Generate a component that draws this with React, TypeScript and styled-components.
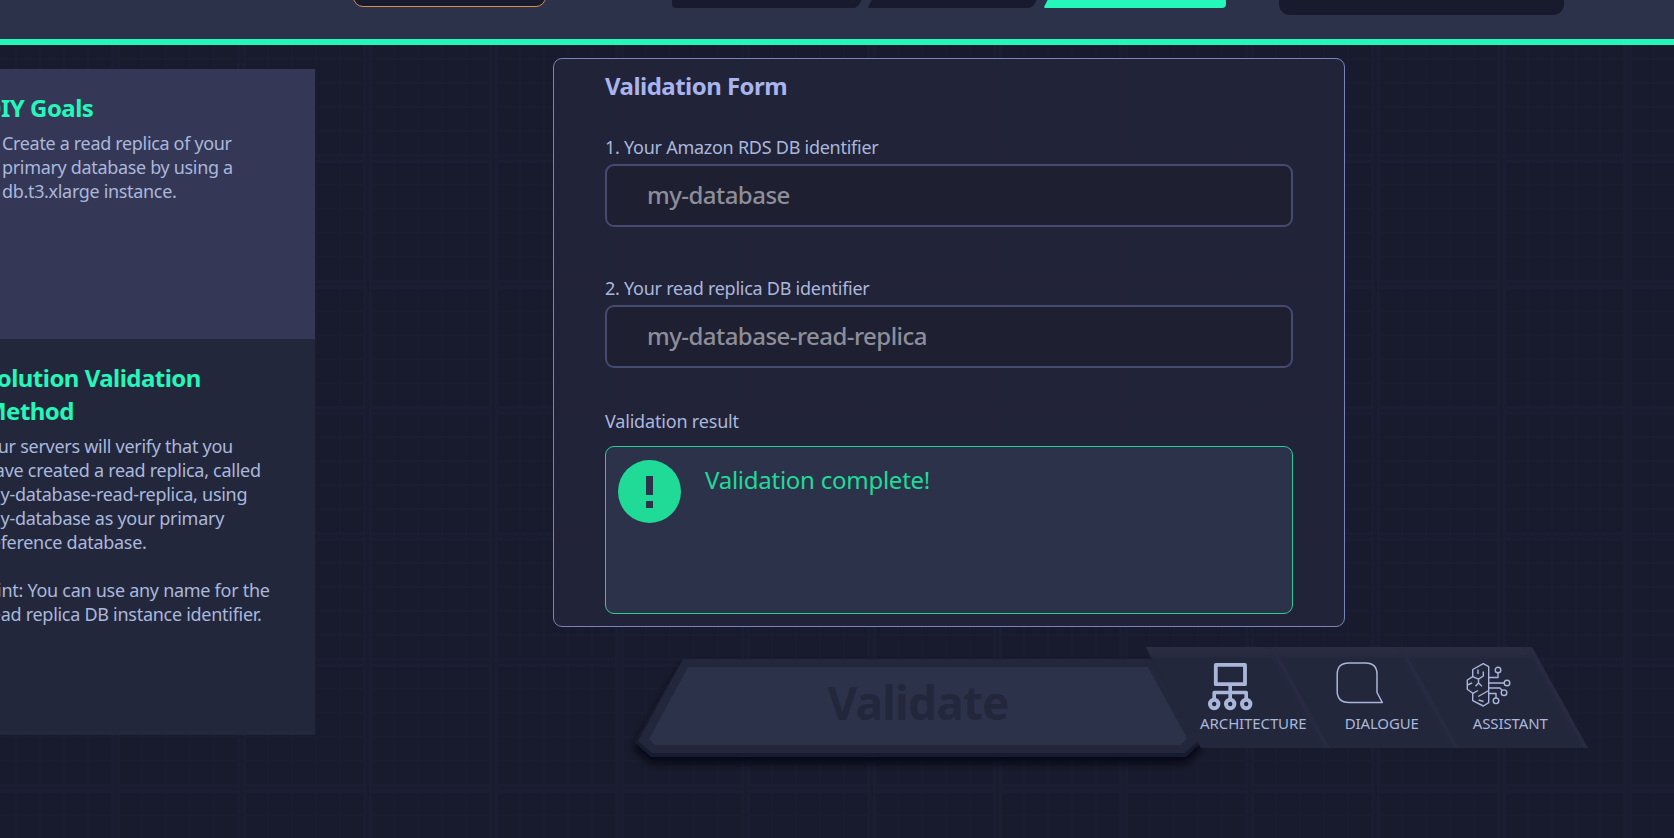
import React from 'react';
import styled, { createGlobalStyle, css } from 'styled-components';

const c = {
  base: '#181b2d',
  header: '#2d324b',
  green: '#25f7bb',
  success: '#1fdb97',
  text: '#aab8dc',
  title: '#a9b4ef',
  slate: '#23273c',
  indigo: '#343755',
};

const GlobalStyle = createGlobalStyle`
  *, *::before, *::after { box-sizing: border-box; }
  body { margin: 0; background: ${c.base}; }
  h2, p, ul { margin: 0; padding: 0; }
  ul { list-style: none; }
  button, input { font: inherit; }
`;

const gridLine = (dir: string, offset: number) =>
  [27, 51, 75, 99]
    .map(
      (p) =>
        `repeating-linear-gradient(${dir}, transparent 0 ${p - 1}px, #1a1d30 ${p - 1}px ${p + 1}px, transparent ${p + 1}px 126px) ${
          dir === 'to right' ? `${offset}px 0` : `0 ${offset}px`
        } / ${dir === 'to right' ? '126px 100%' : '100% 126px'}`
    )
    .join(', ');

const band = (dir: string, offset: number) =>
  `linear-gradient(${dir}, #1b1e32 0 3px, #191c2f 3px 6px, #1b1e32 6px 9px, transparent 9px) ${
    dir === 'to right' ? `${offset - 4}px 0 / 126px 100%` : `0 ${offset - 4}px / 100% 126px`
  }`;

const Page = styled.div`
  width: 1674px;
  height: 838px;
  overflow: hidden;
  color: ${c.text};
  font-family: 'Noto Sans', 'Open Sans', sans-serif;
  font-size: 18px;
  line-height: 24px;
  letter-spacing: -0.26px;
  background: ${band('to right', 115)}, ${band('to bottom', 158)}, ${gridLine('to right', 115)},
    ${gridLine('to bottom', 158)}, ${c.base};
`;

const Header = styled.header`
  display: flex;
  align-items: flex-start;
  height: 45px;
  padding-left: 353px;
  background: ${c.header};
  border-bottom: 6px solid ${c.green};
`;

const Pill = styled.div`
  width: 193px;
  height: 27px;
  margin-top: -20px;
  background: ${c.base};
  border: 1px solid #d98f4e;
  border-radius: 10px;
`;

const Steps = styled.div`
  display: flex;
  margin: -20px 0 0 126px;
`;

const Step = styled.div<{ $shape: 'first' | 'middle' | 'last'; $width: number }>`
  width: ${(p) => p.$width}px;
  height: 28px;
  background: ${c.base};
  ${(p) =>
    p.$shape === 'first' &&
    css`
      border-bottom-left-radius: 4px;
      clip-path: polygon(0 0, 100% 0, calc(100% - 13px) 25px, calc(100% - 17px) 100%, 0 100%);
    `}
  ${(p) =>
    p.$shape === 'middle' &&
    css`
      margin-left: -4px;
      clip-path: polygon(14px 0, 100% 0, calc(100% - 13px) 25px, calc(100% - 17px) 100%, 1px 100%, 0 27px);
    `}
  ${(p) =>
    p.$shape === 'last' &&
    css`
      margin-left: -3px;
      background: ${c.green};
      border-bottom-right-radius: 4px;
      clip-path: polygon(14px 0, 100% 0, 100% 100%, 1px 100%, 0 27px);
    `}
`;

const StatusBox = styled.div`
  width: 285px;
  height: 35px;
  margin: -20px 0 0 53px;
  background: ${c.base};
  border-radius: 11px;
`;

const Body = styled.div`
  display: flex;
  align-items: flex-start;
`;

const Sidebar = styled.aside`
  width: 315px;
  margin-top: 24px;
  overflow: hidden;
`;

const Section = styled.section<{ $tone: 'goals' | 'method' }>`
  height: ${(p) => (p.$tone === 'goals' ? 270 : 396)}px;
  padding-top: 22px;
  margin-left: -16px;
  background: ${(p) => (p.$tone === 'goals' ? c.indigo : c.slate)};
`;

const Heading = styled.h2<{ $color?: string }>`
  width: 260px;
  color: ${(p) => p.$color ?? c.green};
  font-size: 24px;
  font-weight: 700;
  line-height: 33px;
  letter-spacing: -0.53px;
`;

const Goals = styled.ul`
  width: 270px;
  margin-top: 7px;
  padding-left: 18px;
  letter-spacing: -0.33px;
`;

const Copy = styled.p`
  width: 300px;
  margin-top: 7px;
  letter-spacing: -0.28px;
  & + & {
    margin-top: 24px;
  }
`;

const Main = styled.main`
  margin: 13px 0 0 238px;
`;

const Form = styled.section`
  display: flex;
  flex-direction: column;
  width: 792px;
  height: 569px;
  padding: 10px 51px 0;
  background: rgba(34, 36, 58, 0.93);
  border: 1px solid #7884bd;
  border-radius: 9px;
`;

const Field = styled.label<{ $gap: number }>`
  display: flex;
  flex-direction: column;
  gap: 5px;
  margin-top: ${(p) => p.$gap}px;
`;

const Input = styled.input`
  height: 63px;
  padding: 0 39px 3px 40px;
  color: #8d8e99;
  font-size: 24px;
  font-weight: 500;
  letter-spacing: -0.54px;
  background: #1e2032;
  border: 2px solid #464a70;
  border-radius: 9px;
  outline: none;
  &::placeholder {
    color: #8d8e99;
    opacity: 1;
  }
`;

const ResultLabel = styled.div`
  margin-top: 41px;
  letter-spacing: -0.18px;
`;

const Result = styled.div`
  display: flex;
  gap: 24px;
  height: 168px;
  margin-top: 13px;
  padding: 13px 12px;
  color: ${c.success};
  background: ${c.header};
  border: 1px solid #27cf94;
  border-radius: 9px;
`;

const ResultText = styled.p`
  margin-top: 3px;
  font-size: 24px;
  line-height: 33px;
  letter-spacing: -0.25px;
`;

const Actions = styled.div`
  display: flex;
  align-items: flex-start;
  margin: 20px 0 0 81px;
`;

const ValidateButton = styled.button`
  position: relative;
  z-index: 0;
  width: 568px;
  height: 98px;
  margin-top: 12px;
  padding: 0 0 12px;
  color: ${c.slate};
  font-size: 46px;
  font-weight: 700;
  line-height: 60px;
  letter-spacing: -0.85px;
  background: none;
  border: 0;
`;

const Plate = styled.svg`
  position: absolute;
  inset: 0;
  z-index: -1;
  overflow: visible;
`;

const Nav = styled.nav`
  position: relative;
  z-index: 1;
  display: flex;
  width: 443px;
  height: 101px;
  margin-left: -57px;
  padding: 15px 0 0 44px;
`;

const NavItem = styled.a`
  display: flex;
  flex-direction: column;
  align-items: center;
  gap: 3px;
  width: 128.5px;
  font-size: 15px;
  line-height: 20px;
  letter-spacing: -0.12px;
`;

const NavIcon = styled.svg`
  width: 48px;
  height: 48px;
  margin-right: 45px;
  fill: none;
  stroke: #a9b6d9;
  overflow: visible;
`;

export default function App() {
  return (
    <Page>
      <GlobalStyle />
      <Header>
        <Pill />
        <Steps>
          <Step $shape="first" $width={200} />
          <Step $shape="middle" $width={179} />
          <Step $shape="last" $width={182} />
        </Steps>
        <StatusBox />
      </Header>
      <Body>
        <Sidebar>
          <Section $tone="goals">
            <Heading>DIY Goals</Heading>
            <Goals>
              <li>
                Create a read replica of your
                <br />
                primary database by using a<br />
                db.t3.xlarge instance.
              </li>
            </Goals>
          </Section>
          <Section $tone="method">
            <Heading>Solution Validation Method</Heading>
            <Copy>
              Our servers will verify that you
              <br />
              have created a read replica, called
              <br />
              my-database-read-replica, using
              <br />
              my-database as your primary
              <br />
              reference database.
            </Copy>
            <Copy>
              Hint: You can use any name for the
              <br />
              read replica DB instance identifier.
            </Copy>
          </Section>
        </Sidebar>
        <Main>
          <Form>
            <Heading $color={c.title}>Validation Form</Heading>
            <Field $gap={33}>
              1. Your Amazon RDS DB identifier
              <Input placeholder="my-database" />
            </Field>
            <Field $gap={49}>
              2. Your read replica DB identifier
              <Input placeholder="my-database-read-replica" />
            </Field>
            <ResultLabel>Validation result</ResultLabel>
            <Result>
              <svg width="63" height="63" viewBox="0 0 63 63">
                <circle cx="31.5" cy="31.5" r="31.5" fill={c.success} />
                <path d="M28 16h7v19h-7zM28 41h7v7h-7z" fill={c.header} />
              </svg>
              <ResultText>Validation complete!</ResultText>
            </Result>
          </Form>
          <Actions>
            <ValidateButton>
              <Plate width="568" height="98" viewBox="0 0 568 98">
                <defs>
                  <filter id="drop" x="-10%" y="-20%" width="120%" height="150%">
                    <feDropShadow dx="0" dy="6" stdDeviation="5" floodColor="#05060c" floodOpacity="0.85" />
                  </filter>
                </defs>
                <path d="M48 0H518L568 83L552 98H17L0 83Z" fill="#181a2f" filter="url(#drop)" />
                <path d="M49 0H518L564 82L551 94H18L4 82Z" fill={c.slate} />
                <path d="M54 8H514L553 79L547 86H21L15 80Z" fill={c.header} />
              </Plate>
              Validate
            </ValidateButton>
            <Nav>
              <Plate width="443" height="101" viewBox="0 0 443 101">
                <defs>
                  <linearGradient id="navTop" x1="0" y1="0" x2="0" y2="1">
                    <stop offset="0" stopColor="#2a2c42" />
                    <stop offset="0.07" stopColor="#282b41" />
                    <stop offset="0.12" stopColor={c.slate} />
                  </linearGradient>
                </defs>
                <path d="M0.5 0H387L443 101H56Z" fill="url(#navTop)" />
                <path d="M124 0H129L185 101H180ZM253 0H258L314 101H309ZM382 0H387L443 101H438Z" fill="#292c41" opacity="0.75" />
                <path d="M120 0H124L180 101H176ZM249 0H253L309 101H305ZM378 0H382L438 101H434Z" fill="#292c41" opacity="0.35" />
              </Plate>
              <NavItem>
                <NavIcon viewBox="0 0 48 48">
                  <rect x="8.8" y="2.9" width="29.2" height="19.3" strokeWidth="3.8" strokeLinejoin="round" />
                  <path d="M23.2 22V37M7.2 37V30.5H39.2V37" strokeWidth="3.6" strokeLinejoin="round" />
                  <g strokeWidth="4">
                    <circle cx="7.2" cy="42" r="4.2" />
                    <circle cx="23.2" cy="42" r="4.2" />
                    <circle cx="39.2" cy="42" r="4.2" />
                  </g>
                </NavIcon>
                ARCHITECTURE
              </NavItem>
              <NavItem>
                <NavIcon viewBox="0 0 48 48" strokeWidth="1.5" strokeLinejoin="round">
                  <path d="M14 .9H30.5Q42 .9 42 12.5V30.5L47.3 40.5H14Q2.2 40.5 2.2 29V12.5Q2.2 .9 14 .9Z" />
                </NavIcon>
                DIALOGUE
              </NavItem>
              <NavItem>
                <NavIcon viewBox="0 0 48 48" strokeWidth="1.4" strokeLinejoin="round">
                  <path d="M24.7 4.7L19.3 1.6L8.7 7.5V14.7L3.3 18V27.3L8.7 31.3V38.7L19.3 44L24.7 40.7Z" />
                  <path d="M14 7.5V12M19.3 9.5V14L14.5 17.2L8.7 14.7M14.5 17.2V21L11.5 24.3M14.5 21L18 24.3M3.5 23L8.2 20.8M8.7 31.3L14 28.5M24.7 28.5L14.2 34.5M19.5 39.5L14.7 38" />
                  <path d="M24.7 15.5H34V11M24.7 21H40.2M24.7 26H36L38.3 28.5M24.7 31.5H32V36" />
                  <circle cx="34" cy="8" r="2.8" />
                  <circle cx="43" cy="21" r="2.8" />
                  <circle cx="40" cy="30.7" r="2.8" />
                  <circle cx="32" cy="38.8" r="2.8" />
                </NavIcon>
                ASSISTANT
              </NavItem>
            </Nav>
          </Actions>
        </Main>
      </Body>
    </Page>
  );
}
